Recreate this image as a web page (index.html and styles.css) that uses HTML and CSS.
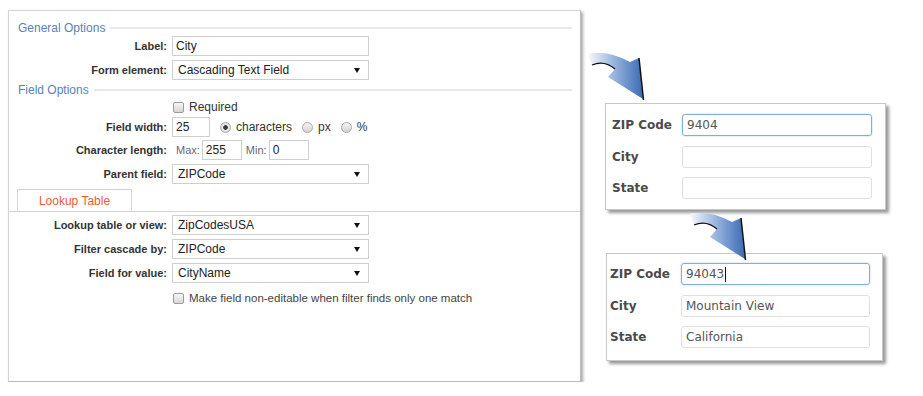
FILE: index.html
```html
<!DOCTYPE html>
<html lang="en">
<head>
<meta charset="UTF-8">
<meta name="viewport" content="width=device-width, initial-scale=1.0">
<title>Cascading Text Field</title>
<link rel="stylesheet" href="styles.css">
</head>
<body>

<div class="page">

<!-- Field settings panel -->
<div class="panel">
<div class="legend"><span>General Options</span></div>
<div class="row row-first"><label class="lbl">Label:</label><input class="txt w-wide" type="text" value="City"></div>
<div class="row"><label class="lbl">Form element:</label><div class="sel">Cascading Text Field</div></div>

<div class="legend legend-gap"><span>Field Options</span></div>
<div class="row row-check"><span class="lbl"></span><span class="check"></span><span>Required</span></div>
<div class="row row-tight"><label class="lbl">Field width:</label><input class="txt w-num" type="text" value="25"><span class="radio on"></span><span class="opt">characters</span><span class="radio"></span><span class="opt">px</span><span class="radio"></span><span class="opt">%</span></div>
<div class="row row-tight"><label class="lbl">Character length:</label><span class="hint hint-max">Max:</span><input class="txt w-len" type="text" value="255"><span class="hint hint-min">Min:</span><input class="txt w-len" type="text" value="0"></div>
<div class="row"><label class="lbl">Parent field:</label><div class="sel">ZIPCode</div></div>

<div class="tabs"><div class="tab">Lookup Table</div></div>
<div class="row row-tight"><label class="lbl">Lookup table or view:</label><div class="sel">ZipCodesUSA</div></div>
<div class="row"><label class="lbl">Filter cascade by:</label><div class="sel">ZIPCode</div></div>
<div class="row"><label class="lbl">Field for value:</label><div class="sel">CityName</div></div>
<div class="row row-check row-last"><span class="lbl"></span><span class="check"></span><span class="note">Make field non-editable when filter finds only one match</span></div>
</div>

<!-- Preview of the cascade -->
<div class="demo">
<svg class="arrow arrow-one" width="60" height="52" viewBox="0 0 60 52">
<defs>
<linearGradient id="arrowFillA" x1="0" y1="0" x2="1" y2="0">
<stop offset="0" stop-color="#f7f9fc"/>
<stop offset="0.45" stop-color="#9db8df"/>
<stop offset="1" stop-color="#3a6bb5"/>
</linearGradient>
</defs>
<path d="M2 5.5 C14 3 30 6 44 14 L53 10 L57 51 L22 29 L29 21 C22 15 14 13.5 6 17 Z" fill="url(#arrowFillA)"/>
<path d="M53 10 L57.5 52" stroke="#111" stroke-width="1.5" fill="none"/>
<path d="M6 17 C14 13.5 22 15 29 21" stroke="#111" stroke-width="1.3" fill="none"/>
</svg>

<div class="card card-a">
<div class="card-row"><span class="card-lbl">ZIP Code</span><div class="field focus">9404</div></div>
<div class="card-row"><span class="card-lbl">City</span><div class="field"></div></div>
<div class="card-row"><span class="card-lbl">State</span><div class="field"></div></div>
</div>

<svg class="arrow arrow-two" width="60" height="52" viewBox="0 0 60 52">
<defs>
<linearGradient id="arrowFillB" x1="0" y1="0" x2="1" y2="0">
<stop offset="0" stop-color="#f7f9fc"/>
<stop offset="0.45" stop-color="#9db8df"/>
<stop offset="1" stop-color="#3a6bb5"/>
</linearGradient>
</defs>
<path d="M2 5.5 C14 3 30 6 44 14 L53 10 L57 51 L22 29 L29 21 C22 15 14 13.5 6 17 Z" fill="url(#arrowFillB)"/>
<path d="M53 10 L57.5 52" stroke="#111" stroke-width="1.5" fill="none"/>
<path d="M6 17 C14 13.5 22 15 29 21" stroke="#111" stroke-width="1.3" fill="none"/>
</svg>

<div class="card card-b">
<div class="card-row"><span class="card-lbl">ZIP Code</span><div class="field focus">94043<span class="caret"></span></div></div>
<div class="card-row"><span class="card-lbl">City</span><div class="field">Mountain View</div></div>
<div class="card-row"><span class="card-lbl">State</span><div class="field">California</div></div>
</div>
</div>

</div>

</body>
</html>
```

FILE: styles.css
```css
body {
margin: 0;
font-family: "Liberation Sans", Arial, sans-serif;
font-size: 12px;
color: #333;
background-color: #fff;
}

.page {
display: flex;
align-items: flex-start;
padding: 10px 0 0 8px;
}

/* settings panel */

.panel {
width: 573px;
height: 372px;
box-sizing: border-box;
border: 1px solid #d4d4d4;
border-right-color: #b9b9b9;
border-bottom-color: #b9b9b9;
box-shadow: 2px 2px 3px rgba(0, 0, 0, 0.35);
padding-top: 10px;
flex-shrink: 0;
}

.legend {
display: flex;
align-items: center;
height: 14px;
padding: 0 8px 0 9px;
color: #5a82b5;
}

.legend::after {
content: "";
flex: 1;
height: 2px;
margin-left: 5px;
background-color: #e8e8e8;
}

.legend-gap {
margin-top: 3px;
}

.row {
display: flex;
align-items: center;
height: 20px;
margin-top: 4px;
}

.row-first {
margin-top: 1px;
}

.row-tight {
margin-top: 3px;
}

.row-check {
height: 14px;
margin-top: 3px;
}

.row-last {
margin-top: 8px;
}

.lbl {
width: 158px;
margin-right: 5px;
text-align: right;
font-size: 11px;
font-weight: bold;
color: #333;
flex-shrink: 0;
}

.txt {
height: 20px;
box-sizing: border-box;
margin: 0;
padding: 0 3px;
border: 1px solid #cfcfcf;
font-family: "Liberation Sans", Arial, sans-serif;
font-size: 12px;
color: #222;
outline: none;
}

.w-wide {
width: 197px;
}

.w-num {
width: 38px;
}

.w-len {
width: 40px;
}

.sel {
position: relative;
display: flex;
align-items: center;
width: 197px;
height: 20px;
box-sizing: border-box;
padding-left: 5px;
border: 1px solid #cfcfcf;
color: #222;
}

.sel::after {
content: "";
position: absolute;
right: 8px;
top: 7px;
border-left: 3px solid transparent;
border-right: 3px solid transparent;
border-top: 5px solid #111;
}

.check {
width: 11px;
height: 11px;
box-sizing: border-box;
margin: 0 5px 0 1px;
border: 1px solid #9c9c9c;
border-radius: 2px;
background: linear-gradient(#f7f7f7, #d6d6d6);
}

.note {
font-size: 11.5px;
color: #444;
}

.radio {
width: 11px;
height: 11px;
box-sizing: border-box;
margin-left: 10px;
border: 1px solid #a9a9a9;
border-radius: 50%;
background: linear-gradient(#f4f4f4, #d3d3d3);
}

.radio.on {
background: radial-gradient(circle, #3a3a3a 0, #3a3a3a 2px, #ececec 2.6px, #d0d0d0 100%);
}

.opt {
margin-left: 5px;
color: #333;
}

.hint {
font-size: 11px;
color: #6a6a6a;
}

.hint-max {
margin: 0 2px 0 4px;
}

.hint-min {
margin: 0 2px 0 4px;
}

.tabs {
display: flex;
height: 22px;
margin-top: 5px;
padding-left: 8px;
border-bottom: 1px solid #d4d4d4;
}

.tab {
display: flex;
align-items: center;
justify-content: center;
width: 115px;
height: 22px;
box-sizing: border-box;
border: 1px solid #d4d4d4;
border-bottom: none;
color: #f05a38;
background-color: #fff;
}

/* cascade preview */

.demo {
display: flex;
flex-direction: column;
align-items: flex-start;
}

.arrow {
display: block;
position: relative;
z-index: 1;
}

.arrow-one {
margin: 38px 0 0 5px;
}

.arrow-two {
margin: -2px 0 0 107px;
}

.card {
box-sizing: border-box;
border: 1px solid #c8c8c8;
box-shadow: 3px 3px 3px rgba(0, 0, 0, 0.4);
background-color: #fff;
font-family: "DejaVu Sans", Verdana, sans-serif;
font-size: 12px;
}

.card-a {
width: 281px;
height: 107px;
margin: 3px 0 0 24px;
padding: 10px 0 0 6px;
}

.card-b {
width: 277px;
height: 108px;
margin: -7px 0 0 25px;
padding: 9px 0 0 3px;
}

.card-row {
display: flex;
align-items: center;
height: 22px;
margin-bottom: 9.5px;
}

.card-lbl {
width: 70px;
font-weight: bold;
color: #4a4a4a;
}

.card-b .card-lbl {
width: 71px;
}

.field {
display: flex;
align-items: center;
width: 190px;
height: 22px;
box-sizing: border-box;
padding-left: 4px;
border: 1px solid #e0e0e0;
border-radius: 3px;
color: #555;
}

.card-b .field {
width: 189px;
}

.field.focus {
border-color: #84aae0;
box-shadow: 0 0 2px rgba(90, 140, 215, 0.45);
}

.caret {
display: inline-block;
width: 1px;
height: 15px;
margin-left: 1px;
background-color: #111;
}
```
